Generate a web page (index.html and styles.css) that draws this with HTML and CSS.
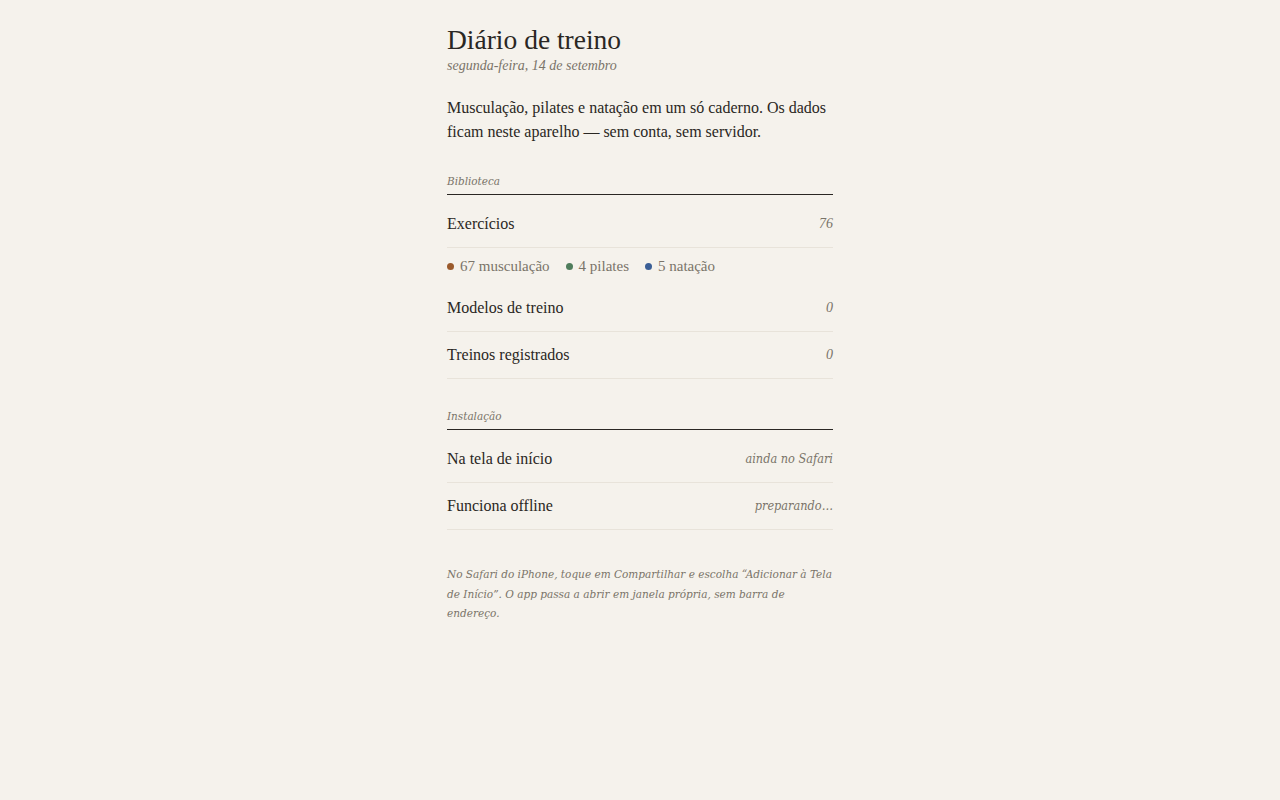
FILE: index.html
```html
<!DOCTYPE html>
<html lang="pt-BR">
<head>
<meta charset="utf-8">
<title>Diário de treino</title>
<link rel="stylesheet" href="styles.css">
</head>
<body>
<main class="page">
  <header class="head">
    <h1 class="title">Diário de treino</h1>
    <p class="date">segunda-feira, 14 de setembro</p>
  </header>
  <p class="intro">Musculação, pilates e natação em um só caderno. Os dados ficam neste aparelho — sem conta, sem servidor.</p>

  <section class="section">
    <h2 class="label">Biblioteca</h2>
    <div class="row"><span class="name">Exercícios</span><span class="val">76</span></div>
    <div class="tags">
      <span class="tag"><span class="dot dot-m"></span>67 musculação</span>
      <span class="tag"><span class="dot dot-p"></span>4 pilates</span>
      <span class="tag"><span class="dot dot-n"></span>5 natação</span>
    </div>
    <div class="row"><span class="name">Modelos de treino</span><span class="val">0</span></div>
    <div class="row"><span class="name">Treinos registrados</span><span class="val">0</span></div>
  </section>

  <section class="section">
    <h2 class="label">Instalação</h2>
    <div class="row"><span class="name">Na tela de início</span><span class="val val-alt">ainda no Safari</span></div>
    <div class="row"><span class="name">Funciona offline</span><span class="val val-alt">preparando…</span></div>
  </section>

  <p class="note">No Safari do iPhone, toque em Compartilhar e escolha “Adicionar à Tela de Início”. O app passa a abrir em janela própria, sem barra de endereço.</p>
</main>
</body>
</html>
```
FILE: styles.css
```css
html, body {
  margin: 0;
  padding: 0;
  background: #f5f2ec;
}
body {
  font-family: "Liberation Serif", "Times New Roman", serif;
  color: #2a2723;
}
.page {
  width: 386px;
  margin: 0 auto;
  padding-top: 23px;
}
.title {
  margin: 0;
  font-size: 27.5px;
  font-weight: normal;
  line-height: 33px;
}
.date {
  margin: 1px 0 0;
  font-size: 14px;
  line-height: 18px;
  font-style: italic;
  color: #7a7469;
}
.intro {
  margin: 21px 0 0;
  font-size: 16px;
  line-height: 24px;
}
.section {
  margin-top: 28px;
}
.label {
  margin: 0 0 6px;
  padding-bottom: 4px;
  border-bottom: 1px solid #2a2723;
  font-family: "DejaVu Serif Condensed", "DejaVu Serif", serif;
  font-style: italic;
  font-weight: normal;
  font-size: 11.6px;
  line-height: 18px;
  color: #7a7469;
}
.row {
  display: flex;
  justify-content: space-between;
  align-items: center;
  padding: 11px 0;
  font-size: 16px;
  line-height: 24px;
  border-bottom: 1px solid #e8e3da;
}
.val {
  font-style: italic;
  font-size: 14px;
  color: #7a7469;
}
.val-alt {
  font-family: "DejaVu Serif Condensed", "DejaVu Serif", serif;
  font-size: 12.6px;
}
.tags {
  display: flex;
  gap: 16px;
  padding: 6px 0 7px;
  font-size: 15px;
  line-height: 24px;
  color: #7a7469;
}
.tag {
  display: flex;
  align-items: center;
  gap: 6px;
}
.dot {
  width: 7px;
  height: 7px;
  border-radius: 50%;
}
.dot-m { background: #9a5a2c; }
.dot-p { background: #4f7d5c; }
.dot-n { background: #3b5f96; }
.note {
  margin: 35px 0 0;
  font-family: "DejaVu Serif Condensed", "DejaVu Serif", serif;
  font-style: italic;
  font-size: 11.7px;
  line-height: 19.5px;
  color: #7a7469;
}
```
